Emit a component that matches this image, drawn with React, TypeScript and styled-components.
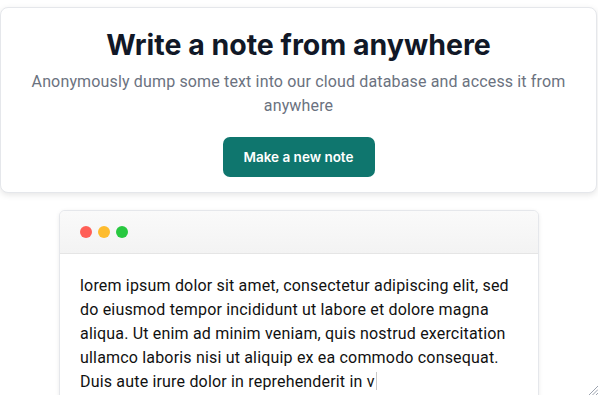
import React from 'react';
import styled, { createGlobalStyle } from 'styled-components';

const GlobalStyle = createGlobalStyle`
    html, body {
        margin: 0;
        padding: 0;
        background: #ffffff;
        font-family: Roboto, 'Noto Sans', sans-serif;
        overflow: hidden;
    }
`;

const noteText =
    'lorem ipsum dolor sit amet, consectetur adipiscing elit, sed do eiusmod tempor incididunt ut labore et dolore magna aliqua. Ut enim ad minim veniam, quis nostrud exercitation ullamco laboris nisi ut aliquip ex ea commodo consequat. Duis aute irure dolor in reprehenderit in v';

const dots = ['#ff5f57', '#febc2e', '#28c840'];

export default function App() {
    return (
        <Page>
            <GlobalStyle />
            <Hero>
                <Title>Write a note from anywhere</Title>
                <Subtitle>
                    Anonymously dump some text into our cloud database and
                    access it from anywhere
                </Subtitle>
                <PrimaryBtn type='button'>Make a new note</PrimaryBtn>
            </Hero>
            <Window>
                <WindowBar>
                    {dots.map((c) => (
                        <Dot key={c} color={c} />
                    ))}
                </WindowBar>
                <NoteBody>
                    {noteText}
                    <Caret />
                </NoteBody>
            </Window>
            <Grip width='10' height='10' viewBox='0 0 10 10'>
                <path d='M10 1 L1 10 M10 4.5 L4.5 10 M10 8 L8 10' stroke='#9ca3af' strokeWidth='1' />
            </Grip>
        </Page>
    );
}

const Page = styled.div`
    position: relative;
    height: 395px;
    overflow: hidden;
    padding-top: 7px;
    box-sizing: border-box;
`;

const Hero = styled.section`
    width: 597px;
    box-sizing: border-box;
    display: flex;
    flex-direction: column;
    align-items: center;
    text-align: center;
    padding: 19px 24px 15px;
    border: 1px solid #e5e7eb;
    border-radius: 8px;
    background: #ffffff;
    box-shadow: 0 2px 6px rgba(0, 0, 0, 0.1);
`;

const Title = styled.h1`
    margin: 0;
    font-family: Inter, Roboto, sans-serif;
    font-size: 28.5px;
    line-height: 36px;
    font-weight: 700;
    color: #111827;
`;

const Subtitle = styled.p`
    margin: 7px 0 0;
    font-size: 16px;
    letter-spacing: 0.15px;
    line-height: 24px;
    color: #6b7280;
`;

const PrimaryBtn = styled.button`
    margin-top: 19px;
    width: 152px;
    height: 40px;
    border: none;
    border-radius: 7px;
    background: #0f766e;
    color: #ffffff;
    font-family: Inter, Roboto, sans-serif;
    font-size: 13.5px;
    font-weight: 600;
    cursor: pointer;
`;

const Window = styled.div`
    width: 478px;
    margin: 17px auto 0;
    border: 1px solid #e5e7eb;
    border-radius: 6px;
    background: #ffffff;
    box-shadow: 0 1px 4px rgba(0, 0, 0, 0.08);
    overflow: hidden;
`;

const WindowBar = styled.div`
    height: 42px;
    display: flex;
    align-items: center;
    gap: 6px;
    padding-left: 20px;
    background: linear-gradient(#fafafa, #f3f3f3);
    border-bottom: 1px solid #e5e5e5;
`;

const Dot = styled.span<{ color: string }>`
    width: 12px;
    height: 12px;
    border-radius: 50%;
    background: ${(p) => p.color};
`;

const NoteBody = styled.div`
    padding: 20px 20px 40px;
    font-size: 16px;
    letter-spacing: 0.18px;
    line-height: 24px;
    color: #111111;
`;

const Caret = styled.span`
    display: inline-block;
    width: 1px;
    height: 18px;
    margin-left: 1px;
    vertical-align: -3px;
    background: #c8c8c8;
`;

const Grip = styled.svg`
    position: absolute;
    right: 0;
    bottom: 0;
`;
